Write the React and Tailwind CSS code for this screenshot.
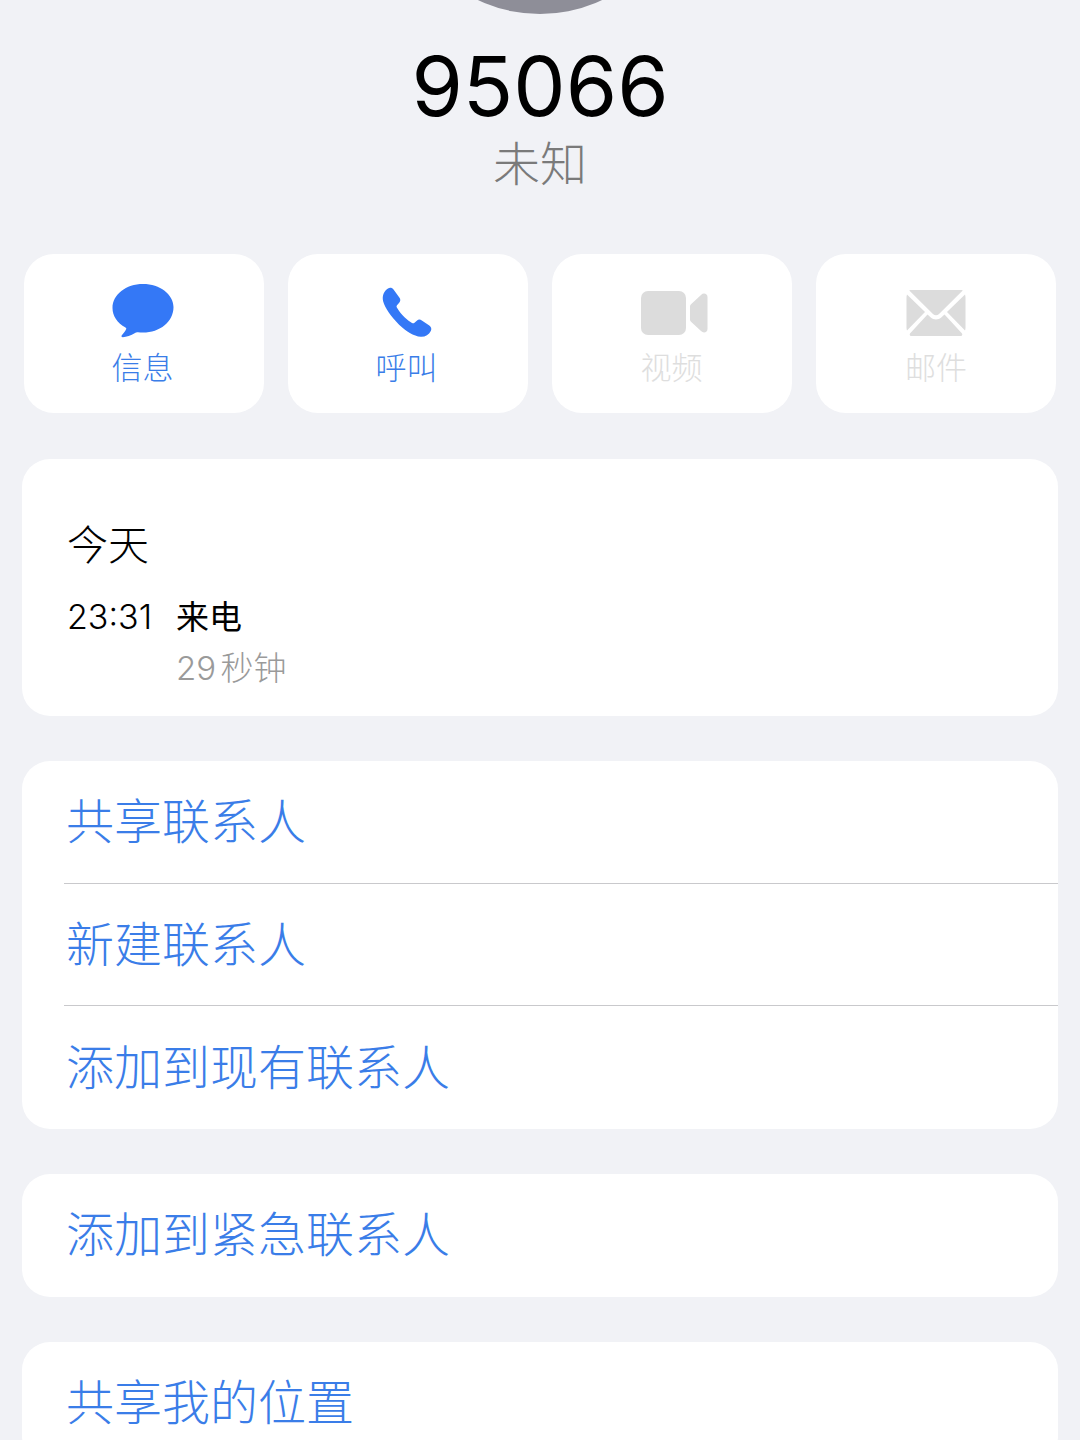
const cjk = "font-['Inter','Noto_Sans_CJK_SC',sans-serif]";

const MessageIcon = () => (
  <svg width="64" height="58" viewBox="0 0 64 58" className="block">
    <path
      fill="#3478f6"
      d="M32 1C15 1 1.500 11.500 1.500 25c0 8 4.800 15 13 19.500 .8 .5 1 1 .6 1.800-1 2.200-3 4.500-4.300 6-.7 1-.2 2 1 2 3.500-.2 8.500-1.700 11.800-4 1.200-.8 2-1 3.400-1 1.500 .2 3.200 .3 5 .3 17 0 30.500-11 30.500-25.600C62.500 11.500 49 1 32 1Z"
    />
  </svg>
);

const PhoneIcon = () => (
  <svg width="52" height="52" viewBox="0 0 52 52" className="block">
    <path
      fill="#3478f6"
      d="M7 1.500c2-1.200 4.200-.7 5.700 1.300l5.800 8c1.200 1.800 1 3.500-.3 5l-2 2.300c-.8 1-.8 1.700-.2 2.700 2 3.500 4.500 6.500 7.500 9.500 2.500 2.300 5 4.200 7.500 5.700 1 .5 1.700.5 2.500-.3l2.300-2c1.500-1.300 3.200-1.500 5-.3l7.500 5c2 1.500 2.500 3.500 1.500 5.500-2 3.800-5.500 6-10 5.800-7-.4-15-5.500-21.700-12C10 29.500 4 21 2.200 14.500 .8 8.500 3 4 7 1.500Z"
    />
  </svg>
);

const VideoIcon = () => (
  <svg width="68" height="46" viewBox="0 0 68 46" className="block">
    <rect x="1" y="1" width="45" height="44" rx="7" fill="#dcdcdc" />
    <path
      fill="#dcdcdc"
      d="M50 16.500c0-1 .3-1.700 1-2.300L61 5c1-.9 2-1.400 3-1.400 2 0 3.500 1.400 3.500 3.500v31.800c0 2-1.500 3.500-3.500 3.500-1 0-2-.5-3-1.400L51 31.800c-.7-.6-1-1.300-1-2.300Z"
    />
  </svg>
);

const MailIcon = () => (
  <svg width="60" height="48" viewBox="0 0 60 48" className="block">
    <path fill="#dcdcdc" d="M4 1h52c.6 0 .6.500.2 1L33 25c-1.800 1.800-4.200 1.800-6 0L3.800 2C3.400 1.500 3.400 1 4 1Z" />
    <path fill="#dcdcdc" d="M1 5.500 19 23 1 41.500c-.3-.6-.5-1.500-.5-3V9c0-1.500.2-2.800.5-3.500Z" />
    <path fill="#dcdcdc" d="M59 5.500 41 23l18 18.500c.3-.6.500-1.500.5-3V9c0-1.500-.2-2.800-.5-3.500Z" />
    <path fill="#dcdcdc" d="M21.500 25.500 4 44.500c-.6.800-.3 2.500 1 2.500h50c1.300 0 1.600-1.700 1-2.500L38.500 25.500l-3 2.800c-3.200 3-7.800 3-11 0Z" />
  </svg>
);

const actions = [
  { label: "信息", icon: <MessageIcon />, color: "text-[#3a7de8]", box: "mt-[29px] -ml-[3px] h-[58px] w-[64px]", text: "-ml-[3px]" },
  { label: "呼叫", icon: <PhoneIcon />, color: "text-[#3a7de8]", box: "mt-[33px] -ml-[3px] h-[54px] w-[52px]", text: "-ml-[3px]" },
  { label: "视频", icon: <VideoIcon />, color: "text-[#dedede]", box: "mt-[36px] ml-[3px] h-[51px] w-[68px]", text: "-ml-[1px]" },
  { label: "邮件", icon: <MailIcon />, color: "text-[#dedede]", box: "mt-[35px] h-[52px] w-[60px]", text: "" },
];

const ActionButton = ({ label, icon, color, box, text }) => (
  <div className="flex h-[159px] w-[240px] flex-col items-center rounded-[30px] bg-white">
    <div className={box}>{icon}</div>
    <span className={`mt-[7px] text-[31px] leading-[40px] font-light ${color} ${text}`}>{label}</span>
  </div>
);

const LinkRow = ({ children, divider }) => (
  <div className="relative flex h-[122.670px] items-center pl-[44px] text-[48px] font-light text-[#3a7de8]">
    <span>{children}</span>
    {divider && <div className="absolute right-0 bottom-0 left-[42px] h-px bg-[#c9c9cc]" />}
  </div>
);

export default function App() {
  return (
    <div className={`flex h-[1440px] w-[1080px] flex-col items-center overflow-hidden bg-[#f1f2f6] ${cjk}`}>
      <div className="-mt-[276px] h-[290px] w-[290px] shrink-0 rounded-full bg-[#8e8e98]" />
      <h1 className="mt-[26px] text-[83px] leading-[92px] font-normal text-black">95066</h1>
      <p className="mt-[2px] text-[47px] leading-[60px] font-light text-[#7a7a7a]">未知</p>

      <div className="mt-[60px] flex w-[1032px] shrink-0 justify-between">
        {actions.map((a) => (
          <ActionButton key={a.label} {...a} />
        ))}
      </div>

      <div className="mt-[46px] h-[257px] w-[1036px] shrink-0 rounded-[28px] bg-white pt-[59px] pl-[45px]">
        <div className="text-[41px] leading-[54px] font-light text-black">今天</div>
        <div className="mt-[23px] flex text-[34px] leading-[44px] text-black">
          <span className="w-[109px] font-light">23:31</span>
          <span className="text-[33px]">来电</span>
        </div>
        <div className="mt-[7px] pl-[109px] text-[33px] leading-[44px] font-light [word-spacing:-5px] text-[#9a9a9a]">29 秒钟</div>
      </div>

      <div className="mt-[45px] w-[1036px] shrink-0 overflow-hidden rounded-[28px] bg-white">
        <LinkRow divider>共享联系人</LinkRow>
        <LinkRow divider>新建联系人</LinkRow>
        <LinkRow>添加到现有联系人</LinkRow>
      </div>

      <div className="mt-[45px] w-[1036px] shrink-0 overflow-hidden rounded-[28px] bg-white">
        <LinkRow>添加到紧急联系人</LinkRow>
      </div>

      <div className="mt-[45px] w-[1036px] shrink-0 overflow-hidden rounded-[28px] bg-white">
        <LinkRow>共享我的位置</LinkRow>
      </div>
    </div>
  );
}
